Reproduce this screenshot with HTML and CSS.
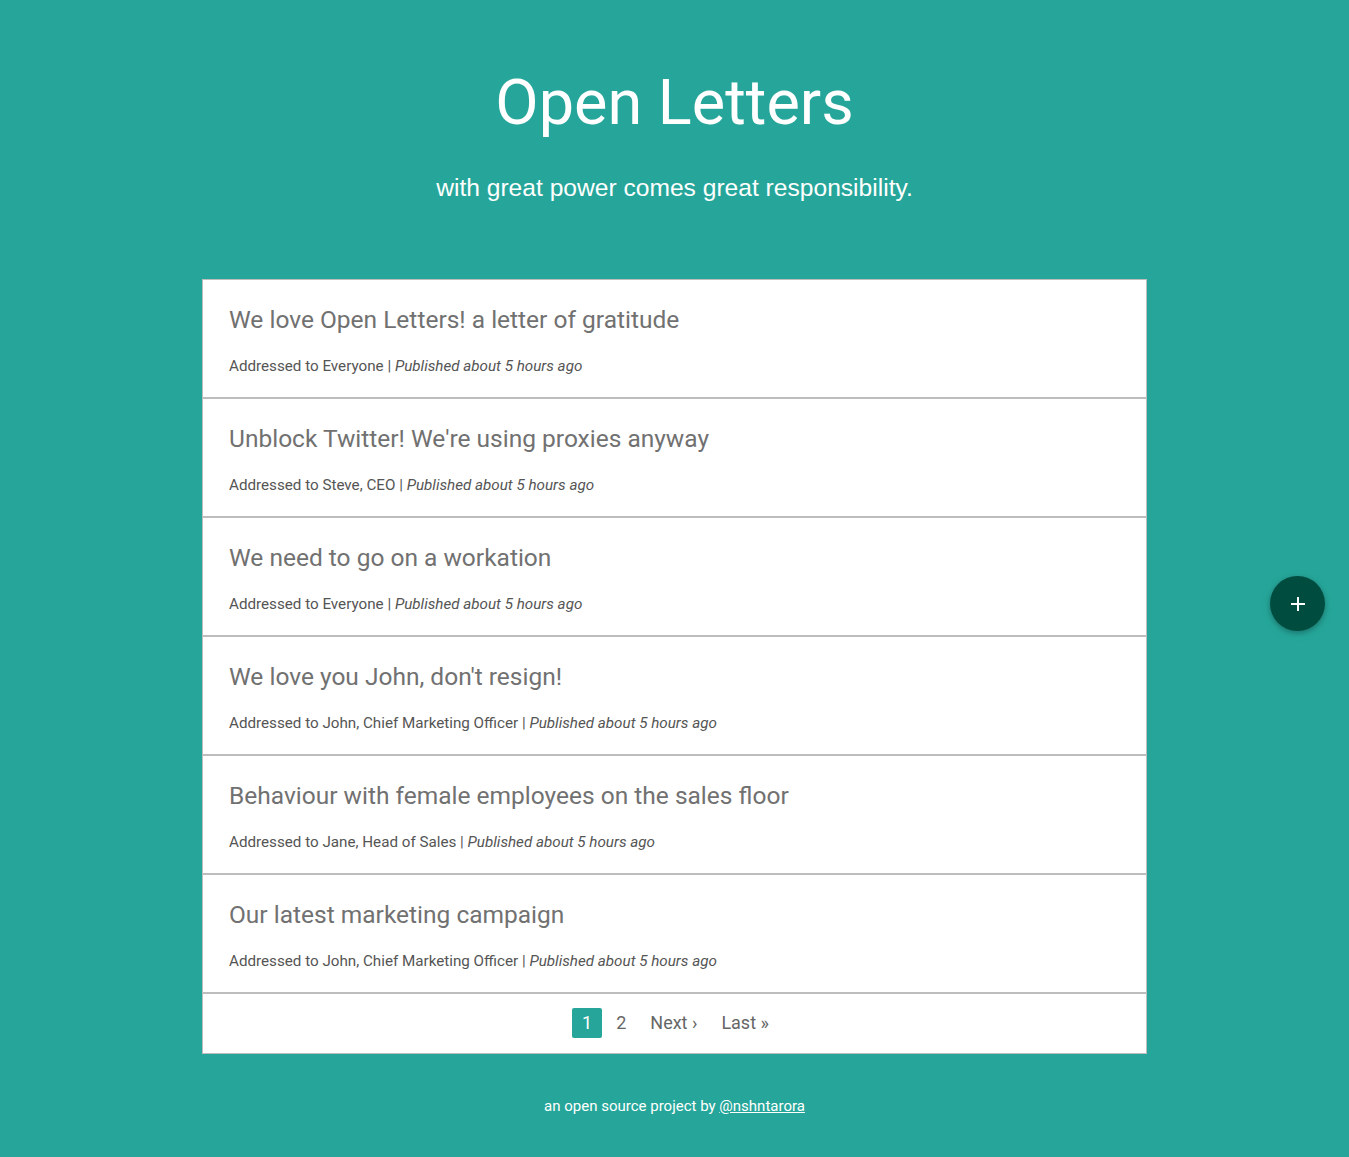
FILE: index.html
```html
<!DOCTYPE html>
<html lang="en">
<head>
<meta charset="utf-8">
<title>Open Letters</title>
<link rel="stylesheet" href="styles.css">
</head>
<body>
<header class="hero">
  <h1 class="hero-title">Open Letters</h1>
  <p class="hero-sub">with great power comes great responsibility.</p>
</header>

<main class="collection">
  <a class="letter" href="#">
    <h2 class="letter-title">We love Open Letters! a letter of gratitude</h2>
    <p class="letter-meta">Addressed to Everyone | <em>Published about 5 hours ago</em></p>
  </a>
  <a class="letter" href="#">
    <h2 class="letter-title">Unblock Twitter! We're using proxies anyway</h2>
    <p class="letter-meta">Addressed to Steve, CEO | <em>Published about 5 hours ago</em></p>
  </a>
  <a class="letter" href="#">
    <h2 class="letter-title">We need to go on a workation</h2>
    <p class="letter-meta">Addressed to Everyone | <em>Published about 5 hours ago</em></p>
  </a>
  <a class="letter" href="#">
    <h2 class="letter-title">We love you John, don't resign!</h2>
    <p class="letter-meta">Addressed to John, Chief Marketing Officer | <em>Published about 5 hours ago</em></p>
  </a>
  <a class="letter" href="#">
    <h2 class="letter-title">Behaviour with female employees on the sales floor</h2>
    <p class="letter-meta">Addressed to Jane, Head of Sales | <em>Published about 5 hours ago</em></p>
  </a>
  <a class="letter" href="#">
    <h2 class="letter-title">Our latest marketing campaign</h2>
    <p class="letter-meta">Addressed to John, Chief Marketing Officer | <em>Published about 5 hours ago</em></p>
  </a>
  <nav class="pagination">
    <span class="page active">1</span>
    <a class="page" href="#">2</a>
    <a class="page" href="#">Next ›</a>
    <a class="page" href="#">Last »</a>
  </nav>
</main>

<footer class="footer">an open source project by <a href="#">@nshntarora</a></footer>

<a class="fab" href="#" aria-label="New letter">
  <svg width="16" height="16" viewBox="0 0 16 16"><path d="M8 1v14M1 8h14" stroke="#fff" stroke-width="2"/></svg>
</a>
</body>
</html>
```

FILE: styles.css
```css
html, body {
  margin: 0;
  padding: 0;
}
body {
  background: #26a69a;
  font-family: Roboto, "Noto Sans", sans-serif;
  min-height: 1157px;
}
.hero {
  text-align: center;
  color: #fff;
  padding-top: 63px;
}
.hero-title {
  margin: 0;
  font-weight: 400;
  font-size: 63px;
  line-height: 80px;
}
.hero-sub {
  margin: 29px 0 0;
  font-family: "Liberation Sans", Arial, sans-serif;
  font-size: 24.6px;
  line-height: 32px;
}
.collection {
  width: 943px;
  margin: 75px auto 0;
  background: #fff;
  border: 1px solid #bdbdbd;
}
.letter {
  display: block;
  padding: 23px 26px 19px;
  border-bottom: 2px solid #bdbdbd;
  text-decoration: none;
  color: #757575;
}
.letter-title {
  margin: 0;
  font-weight: 400;
  font-size: 24.5px;
  line-height: 34px;
  color: #717171;
}
.letter-meta {
  margin: 17px 0 0;
  font-size: 15.2px;
  line-height: 24px;
  color: #555;
}
.letter-meta em {
  font-style: italic;
}
.pagination {
  display: flex;
  justify-content: center;
  align-items: center;
  gap: 4px;
  padding: 14px 0 15px 2px;
}
.page {
  display: inline-block;
  height: 30px;
  line-height: 30px;
  padding: 0 10px;
  text-align: center;
  font-size: 18px;
  color: #666;
  text-decoration: none;
  border-radius: 2px;
}
.page.active {
  background: #26a69a;
  color: #fff;
}
.footer {
  text-align: center;
  color: #fff;
  font-size: 15px;
  padding: 43px 0 40px;
}
.footer a {
  color: #fff;
}
.fab {
  position: fixed;
  left: 1270px;
  top: 576px;
  width: 55px;
  height: 55px;
  border-radius: 50%;
  background: #004d40;
  display: flex;
  align-items: center;
  justify-content: center;
  box-shadow: 0 2px 5px rgba(0,0,0,0.2), 0 2px 10px rgba(0,0,0,0.15);
}
```
